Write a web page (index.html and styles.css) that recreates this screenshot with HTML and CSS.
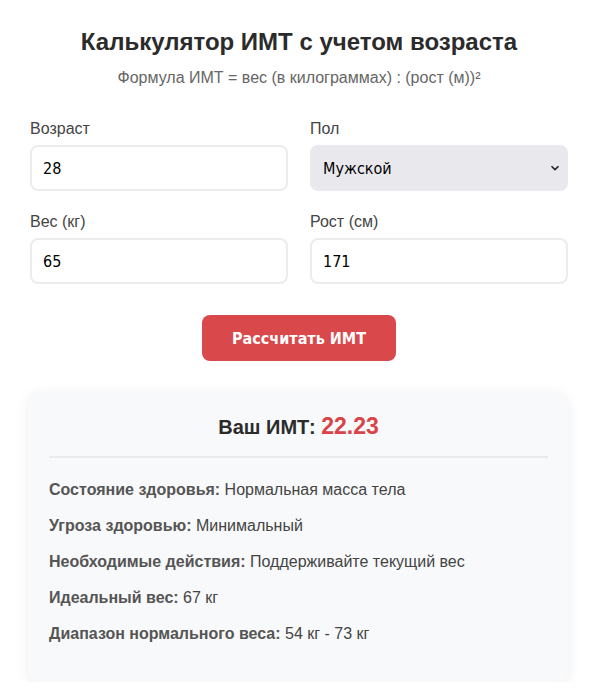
FILE: index.html
```html
<!DOCTYPE html>
<html lang="ru">
<head>
<meta charset="utf-8">
<title>Калькулятор ИМТ</title>
<link rel="stylesheet" href="styles.css">
</head>
<body>
<div class="container">
  <h1 class="title">Калькулятор ИМТ с учетом возраста</h1>
  <p class="formula">Формула ИМТ = вес (в килограммах) : (рост (м))²</p>
  <div class="form-grid">
    <div class="field">
      <label class="label" for="age">Возраст</label>
      <input class="input" id="age" type="text" value="28">
    </div>
    <div class="field">
      <label class="label" for="sex">Пол</label>
      <div class="select">
        <span>Мужской</span>
        <svg class="chev" width="10" height="6" viewBox="0 0 10 6"><path d="M1.5 1.2 L5 4.6 L8.5 1.2" fill="none" stroke="#222" stroke-width="1.6"/></svg>
      </div>
    </div>
    <div class="field">
      <label class="label" for="weight">Вес (кг)</label>
      <input class="input" id="weight" type="text" value="65">
    </div>
    <div class="field">
      <label class="label" for="height">Рост (см)</label>
      <input class="input" id="height" type="text" value="171">
    </div>
  </div>
  <div class="actions">
    <button class="btn">Рассчитать ИМТ</button>
  </div>
  <div class="result">
    <div class="result-title">Ваш ИМТ: <span class="bmi">22.23</span></div>
    <div class="divider"></div>
    <p class="row"><b>Состояние здоровья:</b> Нормальная масса тела</p>
    <p class="row"><b>Угроза здоровью:</b> Минимальный</p>
    <p class="row"><b>Необходимые действия:</b> Поддерживайте текущий вес</p>
    <p class="row"><b>Идеальный вес:</b> 67 кг</p>
    <p class="row"><b>Диапазон нормального веса:</b> 54 кг - 73 кг</p>
  </div>
</div>
</body>
</html>
```

FILE: styles.css
```css
html, body {
  margin: 0;
  background: #ffffff;
}
body {
  font-family: "Liberation Sans", Arial, sans-serif;
  color: #333;
}
.container {
  padding: 28px 27px 0 30px;
}
.title {
  margin: 0;
  font-size: 24px;
  line-height: 28px;
  font-weight: bold;
  text-align: center;
  color: #2b2b2b;
}
.formula {
  margin: 13px 0 0;
  font-size: 16px;
  line-height: 18px;
  text-align: center;
  color: #666;
}
.form-grid {
  margin-top: 33px;
  display: grid;
  grid-template-columns: 1fr 1fr;
  column-gap: 22px;
  row-gap: 22px;
}
.field {
  display: flex;
  flex-direction: column;
}
.label {
  font-size: 16px;
  line-height: 18px;
  color: #444;
  margin-bottom: 7px;
}
.input {
  box-sizing: border-box;
  height: 46px;
  border: 2px solid #ececec;
  border-radius: 8px;
  padding: 0 11px;
  font-family: "DejaVu Sans Condensed", "DejaVu Sans", Tahoma, sans-serif;
  font-size: 16px;
  color: #000;
  background: #fff;
  outline: none;
}
.select {
  box-sizing: border-box;
  height: 46px;
  border-radius: 8px;
  background: #e9e9ed;
  padding: 0 8px 0 13px;
  display: flex;
  align-items: center;
  justify-content: space-between;
  font-family: "DejaVu Sans Condensed", "DejaVu Sans", Tahoma, sans-serif;
  font-size: 16px;
  color: #000;
}
.actions {
  display: flex;
  justify-content: center;
  margin-top: 31px;
}
.btn {
  width: 194px;
  height: 46px;
  border: none;
  border-radius: 8px;
  background: #d9484a;
  color: #fff;
  font-family: "DejaVu Sans Condensed", "DejaVu Sans", Tahoma, sans-serif;
  font-weight: bold;
  font-size: 16px;
}
.result {
  margin: 30px 0 0 -2px;
  background: #f8f9fa;
  border-radius: 12px;
  box-shadow: 0 4px 14px rgba(0, 0, 0, 0.07);
  padding: 20px 20px 39px 21px;
}
.result-title {
  text-align: center;
  font-size: 20px;
  line-height: 30px;
  font-weight: bold;
  color: #2b2b2b;
}
.bmi {
  color: #d9434a;
  font-size: 23px;
}
.divider {
  height: 2px;
  background: #e9ebee;
  margin: 14px 0 23px;
}
.row {
  margin: 0 0 18px;
  font-size: 16px;
  line-height: 18px;
  color: #444;
}
.row b {
  color: #555;
}
.row:last-child {
  margin-bottom: 0;
}
```
